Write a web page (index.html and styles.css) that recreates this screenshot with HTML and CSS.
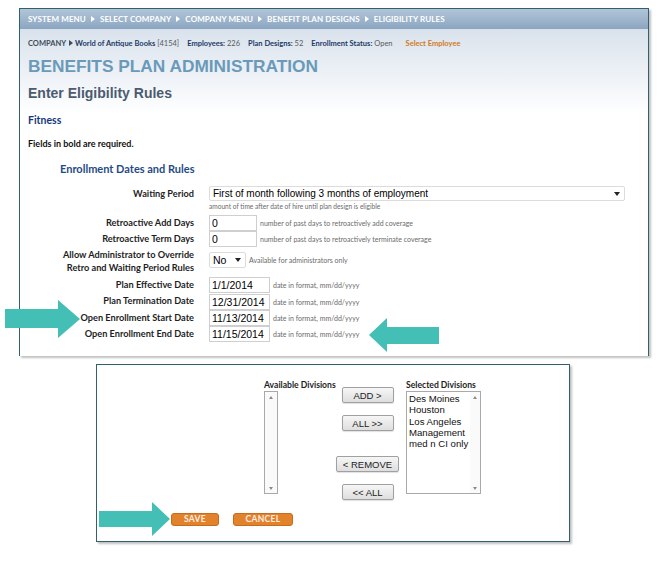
FILE: index.html
```html
<!DOCTYPE html>
<html lang="en">
<head>
<meta charset="utf-8">
<title>Enter Eligibility Rules</title>
<link rel="stylesheet" href="styles.css">
</head>
<body>
<div class="page">
  <section class="panel main">
    <nav class="nav">
      <span>SYSTEM MENU</span><i class="tri"></i>
      <span>SELECT COMPANY</span><i class="tri"></i>
      <span>COMPANY MENU</span><i class="tri"></i>
      <span>BENEFIT PLAN DESIGNS</span><i class="tri"></i>
      <span>ELIGIBILITY RULES</span>
    </nav>
    <div class="content">
      <div class="crumbs">
        <span class="grp"><b class="co">COMPANY</b><i class="tri dark"></i><b class="navy">World of Antique Books</b>&nbsp;<span>[4154]</span></span>
        <span class="grp"><b class="navy">Employees:</b>&nbsp;226</span>
        <span class="grp"><b class="navy">Plan Designs:</b>&nbsp;52</span>
        <span class="grp"><b class="navy">Enrollment Status:</b>&nbsp;Open</span>
        <b class="select-emp">Select Employee</b>
      </div>
      <h1 class="title">BENEFITS PLAN ADMINISTRATION</h1>
      <h2 class="subtitle">Enter Eligibility Rules</h2>
      <h3 class="plan">Fitness</h3>
      <p class="req">Fields in bold are required.</p>
      <h4 class="section">Enrollment Dates and Rules</h4>
      <div class="form">
        <div class="row row-wait">
          <div class="lbl">Waiting Period</div>
          <div class="ctl col">
            <div class="select wide"><span>First of month following 3 months of employment</span><i class="caret"></i></div>
            <div class="hint tiny">amount of time after date of hire until plan design is eligible</div>
          </div>
        </div>
        <div class="row row-std">
          <div class="lbl">Retroactive Add Days</div>
          <div class="ctl"><input class="field short" type="text" value="0"><span class="hint">number of past days to retroactively add coverage</span></div>
        </div>
        <div class="row row-std">
          <div class="lbl">Retroactive Term Days</div>
          <div class="ctl"><input class="field short" type="text" value="0"><span class="hint">number of past days to retroactively terminate coverage</span></div>
        </div>
        <div class="row row-admin">
          <div class="lbl two">Allow Administrator to Override<br>Retro and Waiting Period Rules</div>
          <div class="ctl top">
            <div class="select small"><span>No</span><i class="caret"></i></div>
            <span class="hint">Available for administrators only</span>
          </div>
        </div>
        <div class="row row-date">
          <div class="lbl">Plan Effective Date</div>
          <div class="ctl"><input class="field date" type="text" value="1/1/2014"><span class="hint">date in format, mm/dd/yyyy</span></div>
        </div>
        <div class="row row-date">
          <div class="lbl">Plan Termination Date</div>
          <div class="ctl"><input class="field date" type="text" value="12/31/2014"><span class="hint">date in format, mm/dd/yyyy</span></div>
        </div>
        <div class="row row-date">
          <div class="lbl">Open Enrollment Start Date</div>
          <div class="ctl"><input class="field date" type="text" value="11/13/2014"><span class="hint">date in format, mm/dd/yyyy</span></div>
        </div>
        <div class="row row-date">
          <div class="lbl">Open Enrollment End Date</div>
          <div class="ctl"><input class="field date" type="text" value="11/15/2014"><span class="hint">date in format, mm/dd/yyyy</span></div>
        </div>
      </div>
    </div>
  </section>

  <section class="panel divisions">
    <div class="picker">
      <div class="pick-col avail">
        <div class="pick-title">Available Divisions</div>
        <div class="listbox narrow">
          <div class="scroll"><i class="sa up"></i><i class="sa down"></i></div>
        </div>
      </div>
      <div class="pick-btns">
        <button class="btn b-add" type="button">ADD &gt;</button>
        <button class="btn b-all" type="button">ALL &gt;&gt;</button>
        <button class="btn b-remove" type="button">&lt; REMOVE</button>
        <button class="btn b-none" type="button">&lt;&lt; ALL</button>
      </div>
      <div class="pick-col sel">
        <div class="pick-title">Selected Divisions</div>
        <div class="listbox wide-list">
          <ul class="items">
            <li>Des Moines</li>
            <li>Houston</li>
            <li>Los Angeles</li>
            <li>Management</li>
            <li>med n CI only</li>
          </ul>
          <div class="scroll"><i class="sa up"></i><i class="sa down"></i></div>
        </div>
      </div>
    </div>
    <div class="actions">
      <button class="obtn save" type="button">SAVE</button>
      <button class="obtn cancel" type="button">CANCEL</button>
    </div>
  </section>

  <svg class="arrow" width="664" height="578" viewBox="0 0 664 578" aria-hidden="true">
    <polygon points="5,309 58,309 58,300 80,319 58,338 58,328 5,328" fill="#44bfb5"/>
    <polygon points="369,335 387,318 387,327 439,327 439,344 387,344 387,352" fill="#44bfb5"/>
    <polygon points="99,511 152,511 152,502 170,519 152,536 152,527 99,527" fill="#44bfb5"/>
  </svg>
</div>
</body>
</html>
```

FILE: styles.css
```css
* { box-sizing: border-box; margin: 0; padding: 0; }
html, body { background: #fff; }
body { font-family: Lato, "Liberation Sans", sans-serif; color: #1e1e1e; }

.page { position: relative; width: 664px; height: 578px; padding-top: 8px; overflow: hidden; }

.panel { background: #fff; border: 1px solid #33606d; box-shadow: 2px 2px 2px rgba(0, 0, 0, 0.25); }
.main { margin-left: 19px; width: 630px; height: 348px; }

/* top breadcrumb bar */
.nav {
  display: flex; align-items: center; gap: 5px;
  height: 20px; padding-left: 8px;
  background: linear-gradient(#b2c5d8, #8ba6c1);
  color: #fff; font-size: 8px; font-weight: 700; letter-spacing: 0.1px;
}
.tri {
  display: inline-block; width: 0; height: 0;
  border-left: 4px solid #fff; border-top: 3px solid transparent; border-bottom: 3px solid transparent;
}
.tri.dark { border-left-color: #3d4c5c; margin: 0 2px 0 3px; }

.content { height: 327px; padding: 8px 8px 0; background: linear-gradient(#d9e2ec 0, #fff 85px); }

.crumbs { display: flex; align-items: center; height: 12px; font-size: 7.5px; color: #5a5a5a; }
.crumbs .grp { display: flex; align-items: center; margin-right: 8px; }
.crumbs .co { color: #3d4c5c; }
.crumbs .navy { color: #1d3a66; }
.crumbs .select-emp { margin-left: 5px; color: #d07a1c; }

.title {
  margin-top: 7px; line-height: 20px;
  font-family: "Liberation Sans", Arial, sans-serif; font-size: 17.3px; font-weight: 700; color: #6a9aba;
}
.subtitle {
  margin-top: 8px; line-height: 18px;
  font-family: "Liberation Sans", Arial, sans-serif; font-size: 14px; font-weight: 700; color: #4c5b70;
}
.plan { margin-top: 11px; line-height: 14px; font-size: 10.5px; font-weight: 700; color: #16387a; }
.req { margin-top: 11px; line-height: 12px; font-size: 9px; font-weight: 700; color: #111; }
.section { margin-top: 12px; margin-left: 32px; line-height: 14px; font-size: 11px; font-weight: 700; color: #1f4b86; }

/* form */
.form { margin-top: 10px; }
.row { display: flex; }
.lbl { width: 166px; flex: none; text-align: right; font-size: 9.2px; font-weight: 700; color: #1e1e1e; white-space: nowrap; }
.ctl { margin-left: 15px; display: flex; align-items: center; }
.ctl.col { flex-direction: column; align-items: flex-start; }
.ctl.top { align-items: center; align-self: flex-start; margin-top: 5px; }

.row-wait { height: 29px; }
.row-wait .lbl { line-height: 15px; }
.row-std { height: 16px; }
.row-std .lbl { line-height: 16px; }
.row-admin { height: 30px; }
.row-admin .lbl { padding-top: 1px; line-height: 13px; }
.row-date { height: 16.4px; }
.row-date .lbl { line-height: 16px; }

.field {
  height: 16px; border: 1px solid #cfcfcf; background: #fff; padding: 0 2px;
  font-family: "Liberation Sans", Arial, sans-serif; font-size: 10.5px; color: #000; outline: none;
}
.field.short { width: 48px; }
.field.date { width: 61px; }

.select {
  display: flex; align-items: center; justify-content: space-between;
  border: 1px solid #dcdcdc; border-radius: 2px; background: #fff;
  font-family: "Liberation Sans", Arial, sans-serif; font-size: 10px; color: #000;
  padding: 0 4px 0 3px;
}
.select.wide { width: 416px; height: 15px; }
.select.small { width: 37px; height: 16px; font-size: 10.5px; }
.caret {
  display: inline-block; width: 0; height: 0;
  border-top: 4px solid #222; border-left: 3px solid transparent; border-right: 3px solid transparent;
}

.hint { margin-left: 3px; font-size: 7px; color: #6a6a6a; white-space: nowrap; }
.hint.tiny { margin-left: 0; margin-top: 1px; line-height: 9px; font-size: 6.6px; }

/* divisions picker */
.divisions { margin-left: 96px; margin-top: 8px; width: 474px; height: 178px; padding-top: 15px; }
.picker { display: flex; margin-left: 167px; }
.pick-col { display: flex; flex-direction: column; }
.avail { width: 72px; }
.sel { margin-left: 7px; }
.pick-title { line-height: 10px; font-size: 8.6px; font-weight: 700; color: #1e1e1e; white-space: nowrap; }

.listbox { display: flex; margin-top: 1px; height: 103px; border: 1px solid #a9a9a9; background: #fff; }
.listbox.narrow { width: 14px; }
.listbox.wide-list { width: 75px; }
.items {
  flex: 1; min-width: 0; list-style: none; padding: 1px 0 0 2px;
  font-family: "Liberation Sans", Arial, sans-serif; font-size: 9.6px; line-height: 11.3px; color: #111; white-space: nowrap;
}
.scroll { width: 10px; flex: none; display: flex; flex-direction: column; justify-content: space-between; align-items: center; padding: 4px 0 3px; background: #fafafa; }
.narrow .scroll { width: 12px; }
.sa { display: block; width: 0; height: 0; border-left: 2px solid transparent; border-right: 2px solid transparent; }
.sa.up { border-bottom: 3px solid #8a8a8a; }
.sa.down { border-top: 3px solid #8a8a8a; }

.pick-btns { width: 63px; display: flex; flex-direction: column; align-items: center; }
.btn {
  height: 16px; border: 1px solid #a0a0a0; border-radius: 2px;
  background: linear-gradient(#f6f6f6, #dedede);
  box-shadow: 0 1px 1px rgba(0, 0, 0, 0.12);
  font-family: "Liberation Sans", Arial, sans-serif; font-size: 9.5px; color: #222;
}
.b-add { width: 52px; margin-top: 7px; }
.b-all { width: 52px; margin-top: 12px; }
.b-remove { width: 63px; margin-top: 25px; }
.b-none { width: 52px; margin-top: 12px; }

.actions { display: flex; gap: 14px; margin-left: 74px; margin-top: 13px; }
.obtn {
  height: 13px; border: 1px solid #c86c1c; border-radius: 3px; background: #e2822c;
  font-family: Lato, sans-serif; font-size: 8.5px; font-weight: 700; color: #fcefe2; letter-spacing: 0.3px;
  line-height: 11px;
}
.save { width: 48px; }
.cancel { width: 60px; }

/* annotation arrows drawn over the panels */
.arrow { position: absolute; left: 0; top: 0; pointer-events: none; }
```
